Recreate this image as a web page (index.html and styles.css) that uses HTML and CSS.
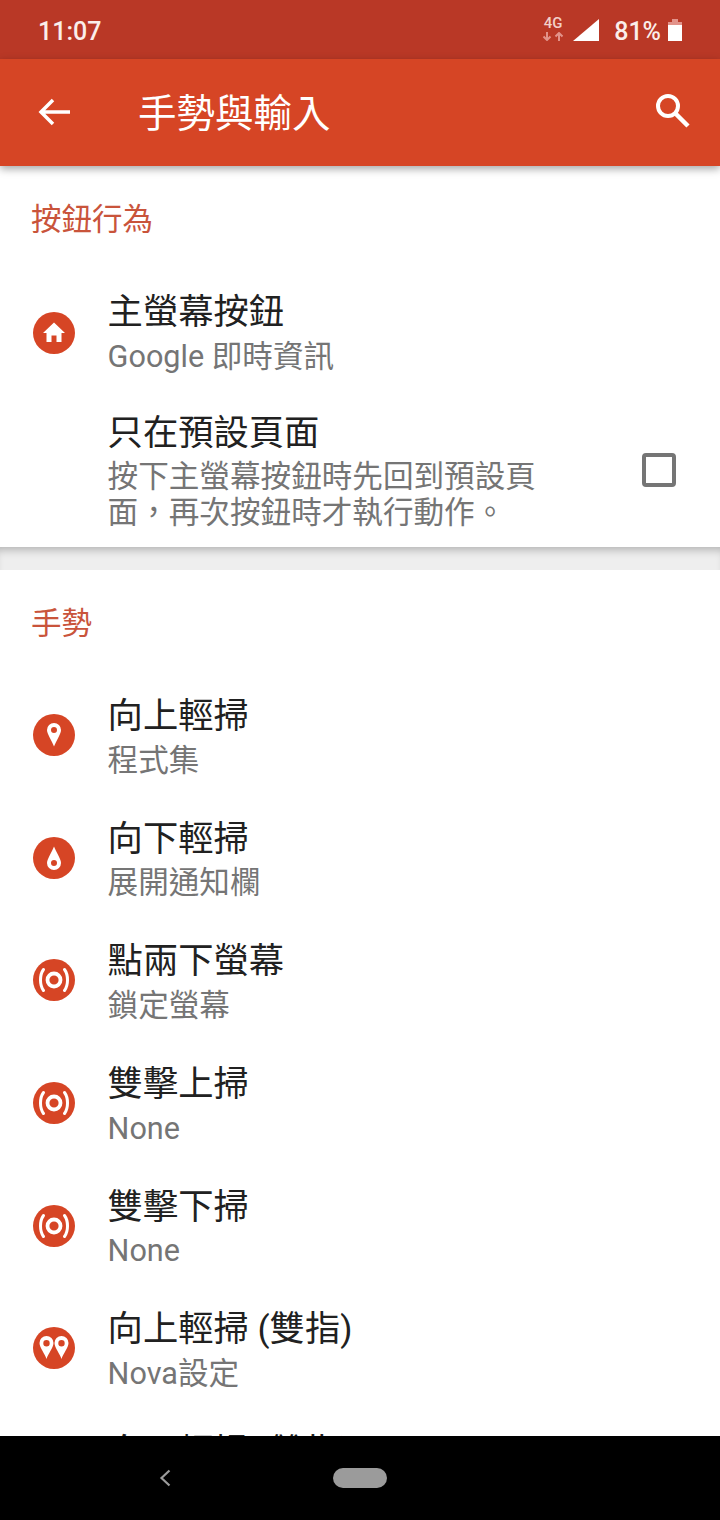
FILE: index.html
```html
<!DOCTYPE html>
<html lang="zh-Hant">
<head>
<meta charset="utf-8">
<title>手勢與輸入</title>
<link rel="stylesheet" href="styles.css">
</head>
<body>
<div class="phone">
  <div class="status">
    <span class="time">11:07</span>
    <div class="status-right">
      <div class="net">
        <span class="net-label">4G</span>
        <svg class="net-arrows" width="22" height="9" viewBox="0 0 22 9"><path d="M5 0v7M1.500 4.500L5 8l3.500-3.500M17 9V2M13.500 4.500L17 1l3.500 3.500" fill="none" stroke="#e2938a" stroke-width="2"/></svg>
      </div>
      <svg class="signal" width="26" height="22" viewBox="0 0 26 22"><path d="M26 0v22H0z" fill="#fff"/></svg>
      <span class="pct">81%</span>
      <svg class="battery" width="14" height="22" viewBox="0 0 14 22"><path d="M4 0h6v3h4v4H0V3h4z" fill="#e2938a"/><path d="M0 6h14v16H0z" fill="#fff"/></svg>
    </div>
  </div>
  <header class="appbar">
    <svg class="back" width="32" height="28" viewBox="0 0 32 28"><path d="M32 14H3M15 2L3 14l12 12" fill="none" stroke="#fff" stroke-width="3.500"/></svg>
    <h1 class="title">手勢與輸入</h1>
    <svg class="search" width="36" height="36" viewBox="0 0 36 36"><circle cx="13" cy="13" r="10" fill="none" stroke="#fff" stroke-width="4"/><path d="M20.500 20.500L33 33" stroke="#fff" stroke-width="4.500"/></svg>
  </header>
  <main class="content">
    <section class="card first">
      <h2 class="section-head">按鈕行為</h2>
      <div class="row">
        <svg class="ico" viewBox="0 0 42 42"><circle cx="21" cy="21" r="21" fill="#d64525"/><path d="M21 10.500L32 21h-3.500v9H23.500v-6.500h-5V30h-5v-9H10z" fill="#fff"/></svg>
        <div class="text">
          <div class="row-title">主螢幕按鈕</div>
          <div class="row-sub">Google 即時資訊</div>
        </div>
      </div>
      <div class="row row-long">
        <div class="text narrow">
          <div class="row-title">只在預設頁面</div>
          <div class="row-sub">按下主螢幕按鈕時先回到預設頁面，再次按鈕時才執行動作。</div>
        </div>
        <div class="check"></div>
      </div>
    </section>
    <div class="divider"></div>
    <section class="card gestures">
      <h2 class="section-head">手勢</h2>
      <div class="row">
        <svg class="ico" viewBox="0 0 42 42"><circle cx="21" cy="21" r="21" fill="#d64525"/><path fill-rule="evenodd" d="M21 32.500C19 27 14 20 14 16a7 7 0 0 1 14 0C28 20 23 27 21 32.500zM21 13a3 3 0 1 0 0 6 3 3 0 0 0 0-6z" fill="#fff"/></svg>
        <div class="text"><div class="row-title">向上輕掃</div><div class="row-sub">程式集</div></div>
      </div>
      <div class="row">
        <svg class="ico" viewBox="0 0 42 42"><circle cx="21" cy="21" r="21" fill="#d64525"/><path fill-rule="evenodd" d="M21 9.500C19 15 14 22 14 26a7 7 0 0 0 14 0C28 22 23 15 21 9.500zM21 23a3 3 0 1 1 0 6 3 3 0 0 1 0-6z" fill="#fff"/></svg>
        <div class="text"><div class="row-title">向下輕掃</div><div class="row-sub">展開通知欄</div></div>
      </div>
      <div class="row">
        <svg class="ico" viewBox="0 0 42 42"><use href="#pulse"/></svg>
        <div class="text"><div class="row-title">點兩下螢幕</div><div class="row-sub">鎖定螢幕</div></div>
      </div>
      <div class="row">
        <svg class="ico" viewBox="0 0 42 42"><use href="#pulse"/></svg>
        <div class="text"><div class="row-title">雙擊上掃</div><div class="row-sub">None</div></div>
      </div>
      <div class="row">
        <svg class="ico" viewBox="0 0 42 42"><use href="#pulse"/></svg>
        <div class="text"><div class="row-title">雙擊下掃</div><div class="row-sub">None</div></div>
      </div>
      <div class="row">
        <svg class="ico" viewBox="0 0 42 42"><circle cx="21" cy="21" r="21" fill="#d64525"/><path fill-rule="evenodd" d="M13.500 32C12 27 6.500 20.500 6.500 16a7 7 0 0 1 14 0C20.500 20.500 15 27 13.500 32zM13.500 13a3.200 3.200 0 1 0 0 6.400 3.200 3.200 0 0 0 0-6.400zM28.500 32C27 27 21.500 20.500 21.500 16a7 7 0 0 1 14 0C35.500 20.500 30 27 28.500 32zM28.500 13a3.200 3.200 0 1 0 0 6.400 3.200 3.200 0 0 0 0-6.400z" fill="#fff"/></svg>
        <div class="text"><div class="row-title">向上輕掃 (雙指)</div><div class="row-sub">Nova設定</div></div>
      </div>
      <div class="row">
        <div class="text"><div class="row-title">向下輕掃 (雙指)</div></div>
      </div>
    </section>
  </main>
  <nav class="navbar">
    <svg class="nav-back" width="12" height="18" viewBox="0 0 12 18"><path d="M10.500 1.500L2.500 9l8 7.500" fill="none" stroke="#9b9b9b" stroke-width="2.200"/></svg>
    <div class="pill"></div>
  </nav>
  <svg class="defs" width="0" height="0"><defs><g id="pulse"><circle cx="21" cy="21" r="21" fill="#d64525"/><circle cx="21" cy="21" r="6.500" fill="none" stroke="#fff" stroke-width="3.800"/><path d="M10.500 10.500C6.500 16 6.500 26 10.500 31.500M31.500 10.500C35.500 16 35.500 26 31.500 31.500" fill="none" stroke="#fff" stroke-width="3" stroke-linecap="round"/></g></defs></svg>
</div>
</body>
</html>
```
FILE: styles.css
```css
* { box-sizing: border-box; }
html, body { margin: 0; padding: 0; }
body { background: #fff; font-family: Roboto, "Noto Sans CJK TC", sans-serif; }
.phone { width: 720px; height: 1520px; display: flex; flex-direction: column; overflow: hidden; }
.defs { display: block; height: 0; }
.status { height: 59px; flex: none; background: #b93826; color: #fff; display: flex; align-items: center; justify-content: space-between; padding: 0 38px; }
.time { font-size: 25px; font-weight: 500; color: #fbeeea; margin-top: 3px; }
.status-right { display: flex; align-items: center; }
.net { width: 22px; display: flex; flex-direction: column; align-items: center; margin-right: 9px; margin-top: -1px; }
.net-label { font-size: 15px; line-height: 13px; font-weight: 500; color: #f3cfc8; }
.net-arrows { display: block; margin-top: 2px; }
.signal { display: block; margin-right: 15px; }
.pct { font-size: 25px; font-weight: 500; color: #fbeeea; margin: 3px 7px 0 0; }
.battery { display: block; }
.appbar { height: 107px; flex: none; background: #d64525; display: flex; align-items: center; padding: 0 29px 0 38px; box-shadow: 0 3px 8px rgba(0,0,0,.35); position: relative; z-index: 2; }
.back { display: block; flex: none; margin-top: -1px; }
.title { flex: 1; margin: 2px 0 0 68px; font-size: 38.500px; font-weight: 400; line-height: 50px; color: #fff; }
.search { display: block; flex: none; margin-top: -4px; }
.content { flex: 1; min-height: 0; overflow: hidden; }
.card { background: #fff; }
.first { height: 381px; }
.section-head { margin: 0; height: 106px; padding: 30.500px 0 0 31px; font-size: 30.500px; font-weight: 400; line-height: 46px; color: #c9543b; }
.row { display: flex; align-items: flex-start; height: 122.670px; padding: 17px 0 0 33px; position: relative; }
.row-long { height: 152px; padding-top: 15px; }
.ico { width: 42px; height: 42px; flex: none; display: block; position: absolute; left: 33px; top: 40px; }
.gestures .ico { top: 38px; }
.text { margin-left: 74.600px; flex: 1; min-width: 0; }
.narrow { flex: none; width: 434px; }
.row-title { font-size: 35.300px; line-height: 46px; color: #212121; }
.row-sub { font-size: 30.600px; line-height: 36px; margin-top: 3.600px; color: #757575; }
.check { width: 34px; height: 34px; border: 4.500px solid #757575; border-radius: 4px; position: absolute; left: 642px; top: 58px; }
.divider { height: 23px; background: #eeeeee; box-shadow: inset 0 8px 8px -5px rgba(0,0,0,.25); }
.navbar { height: 84px; flex: none; background: #000; display: flex; align-items: center; position: relative; z-index: 3; padding: 0 0 0 159px; }
.nav-back { display: block; flex: none; }
.pill { width: 54px; height: 20px; border-radius: 10px; background: #9b9b9b; margin-left: 162px; }
```
